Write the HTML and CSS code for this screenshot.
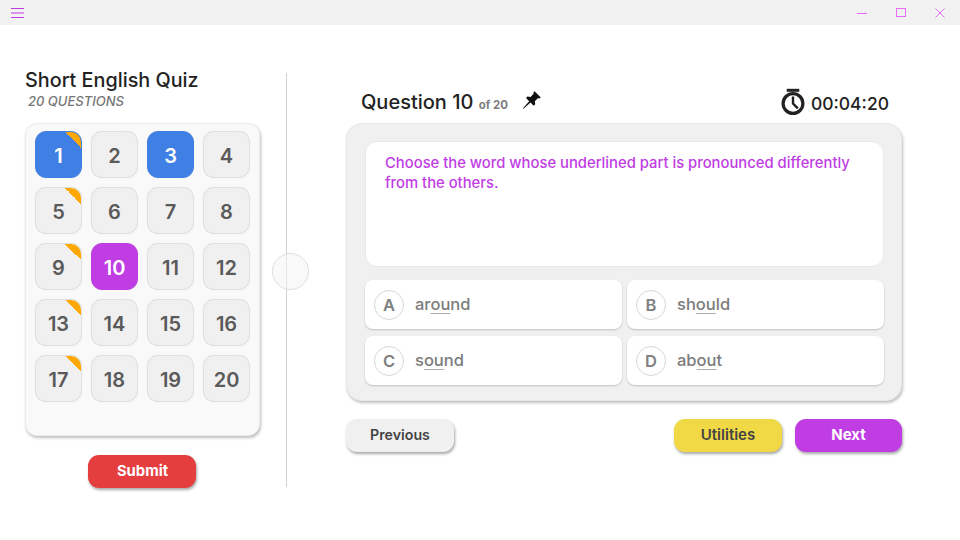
FILE: index.html
```html
<!DOCTYPE html>
<html lang="en">
<head>
<meta charset="utf-8">
<title>Short English Quiz</title>
<link rel="stylesheet" href="styles.css">
</head>
<body>
<header class="titlebar">
  <svg class="menu-icon" width="13" height="10" viewBox="0 0 13 10"><path d="M0 .5h13M0 5h13M0 9.500h13" stroke="#c13be3" stroke-width="1" fill="none"/></svg>
  <div class="win-controls">
    <svg width="10" height="10" viewBox="0 0 10 10"><path d="M0 5.500h10" stroke="#e66bf5" fill="none"/></svg>
    <svg width="10" height="10" viewBox="0 0 10 10"><rect x=".5" y=".5" width="9" height="8" stroke="#e66bf5" fill="none"/></svg>
    <svg width="10" height="10" viewBox="0 0 10 10"><path d="M.5.5l9 9M9.500.5l-9 9" stroke="#e66bf5" fill="none"/></svg>
  </div>
</header>
<main class="layout">
  <section class="sidebar">
    <h1 class="quiz-title">Short English Quiz</h1>
    <p class="quiz-sub">20 QUESTIONS</p>
    <div class="grid-card">
      <div class="grid">
        <button class="num done flag">1</button><button class="num">2</button><button class="num done">3</button><button class="num">4</button>
        <button class="num flag">5</button><button class="num">6</button><button class="num">7</button><button class="num">8</button>
        <button class="num flag">9</button><button class="num current">10</button><button class="num">11</button><button class="num">12</button>
        <button class="num flag">13</button><button class="num">14</button><button class="num">15</button><button class="num">16</button>
        <button class="num flag">17</button><button class="num">18</button><button class="num">19</button><button class="num">20</button>
      </div>
    </div>
    <button class="btn submit">Submit</button>
  </section>
  <div class="divider"><span class="handle"></span></div>
  <section class="content">
    <div class="q-head">
      <h2 class="q-title">Question 10 <small>of 20</small></h2>
      <svg class="pin" width="20" height="20" viewBox="0 0 20 20"><path d="M12.600 1.200l6.200 6.200-1.500 1-1.200-.5-3.300 3.300.4 3-1.500 1.500-3.200-3.200-7 6.200-.5-.5 6.200-7-3.200-3.200L5.500 6.500l3 .4 3.300-3.300-.4-1.300z" fill="#111"/></svg>
      <div class="timer">
        <svg width="24" height="28" viewBox="0 0 24 28"><path d="M5.700 .8h12.600v3H5.700z" fill="#222"/><circle cx="12" cy="15.500" r="9.900" stroke="#222" stroke-width="3.200" fill="none"/><path d="M12 8.500v7l4.800 4.800" stroke="#222" stroke-width="2.400" fill="none"/></svg>
        <span>00:04:20</span>
      </div>
    </div>
    <div class="panel">
      <div class="question">Choose the word whose underlined part is pronounced differently from the others.</div>
      <div class="options">
        <div class="option"><span class="letter">A</span><span class="word">ar<u>ou</u>nd</span></div>
        <div class="option"><span class="letter">B</span><span class="word">sh<u>ou</u>ld</span></div>
        <div class="option"><span class="letter">C</span><span class="word">s<u>ou</u>nd</span></div>
        <div class="option"><span class="letter">D</span><span class="word">ab<u>ou</u>t</span></div>
      </div>
    </div>
    <div class="actions">
      <button class="btn prev">Previous</button>
      <span class="spacer"></span>
      <button class="btn util">Utilities</button>
      <button class="btn next">Next</button>
    </div>
  </section>
</main>
</body>
</html>
```
FILE: styles.css
```css
* { box-sizing: border-box; }
html, body { margin: 0; padding: 0; }
body { width: 960px; height: 540px; overflow: hidden; background: #fff; font-family: "Inter", "Noto Sans", sans-serif; color: #222; }
button { font-family: inherit; border: 0; padding: 0; }

.titlebar { height: 25px; background: #f2f2f2; display: flex; align-items: center; justify-content: space-between; padding: 0 15px 0 11px; }
.menu-icon { display: block; }
.win-controls { display: flex; gap: 29px; }
.win-controls svg { display: block; }

.layout { display: flex; padding: 48px 0 0 25px; }

.sidebar { width: 235px; display: flex; flex-direction: column; align-items: center; }
.quiz-title { margin: -5px 0 0; width: 100%; font-size: 19.800px; line-height: 24px; font-weight: 500; }
.quiz-sub { margin: 1px 0 0; width: 100%; padding-left: 3px; font-size: 13px; line-height: 16px; font-style: italic; color: #777; font-weight: 500; }
.grid-card { margin-top: 14px; width: 235px; height: 313px; padding: 8px 10px; background: #f9f9f9; border: 1px solid #ececec; border-radius: 12px; box-shadow: 1px 2px 3px rgba(0,0,0,.25); }
.grid { display: grid; grid-template-columns: repeat(4, 47px); grid-auto-rows: 47px; gap: 9px; margin: -1px 0 0 -1px; }
.num { position: relative; overflow: hidden; padding-top: 2px; background: #f0f0f0; border: 1px solid #e0e0e0; border-radius: 11px; font-size: 20px; font-weight: 600; color: #5a5a5a; box-shadow: 0 0 1px rgba(0,0,0,.08); }
.num.done { background: #4080e4; border-color: #4080e4; color: #fff; }
.num.current { background: #c03ce3; border-color: #c03ce3; color: #fff; }
.num.flag::after { content: ""; position: absolute; top: -1px; right: -1px; width: 18px; height: 18px; background: linear-gradient(45deg, transparent 50%, #ffa800 50%); }

.btn { height: 33px; width: 108px; padding-bottom: 2px; border-radius: 11px; font-size: 15px; font-weight: 700; box-shadow: 1px 2px 3px rgba(0,0,0,.35); }
.submit { margin: 19px 2px 0 0; padding-left: 2px; background: #e53e3e; color: #fff; font-size: 14.800px; }

.divider { position: relative; margin-left: 26px; width: 1px; height: 414px; background: #cfcfcf; }
.handle { position: absolute; left: -14px; top: 180px; width: 37px; height: 37px; border-radius: 50%; background: rgba(245,245,245,.6); border: 1px solid #dedede; }

.content { margin-left: 59px; width: 556px; }
.q-head { height: 50px; display: flex; align-items: center; padding: 8px 13px 0 15px; }
.q-title { margin: 0; font-size: 20px; font-weight: 500; }
.q-title small { font-size: 11.500px; font-weight: 700; color: #808080; letter-spacing: 0; }
.pin { margin: -5px 0 0 14px; }
.timer { margin: 2px 0 0 auto; display: flex; align-items: center; gap: 6px; font-size: 17.500px; font-weight: 500; }
.timer svg { display: block; margin-top: -2px; }

.panel { height: 278px; background: #f0f0f0; border: 1px solid #e8e8e8; border-radius: 16px; padding: 17px 17px 0 18px; box-shadow: 1px 2px 3px rgba(0,0,0,.25); }
.question { height: 126px; background: #fff; border: 1px solid #e8e8e8; border-radius: 12px; padding: 11px 19px; font-size: 14.800px; line-height: 20px; font-weight: 500; color: #c03ce3; }
.options { display: grid; grid-template-columns: 257px 257px; grid-auto-rows: 49px; gap: 7px 5px; margin-top: 13px; }
.option { display: flex; align-items: center; gap: 11px; padding-left: 9px; background: #fff; border-radius: 8px; box-shadow: 0 1px 2px rgba(0,0,0,.2); font-size: 16.500px; font-weight: 500; color: #7c7c7c; }
.word { padding-bottom: 2px; }
.option u { text-decoration-thickness: 1px; text-underline-offset: 3px; text-decoration-color: #aaa; }
.letter { width: 30px; height: 30px; border-radius: 50%; border: 1px solid #d8d8d8; display: flex; align-items: center; justify-content: center; font-size: 16.500px; font-weight: 600; color: #808080; }

.actions { display: flex; gap: 13px; margin-top: 18px; }
.spacer { flex: 1; }
.prev { background: #f0f0f0; color: #444; font-size: 14.200px; font-weight: 600; }
.util { background: #f0d944; color: #444; font-weight: 600; }
.next { width: 107px; background: #c03ce3; color: #fff; }
```
